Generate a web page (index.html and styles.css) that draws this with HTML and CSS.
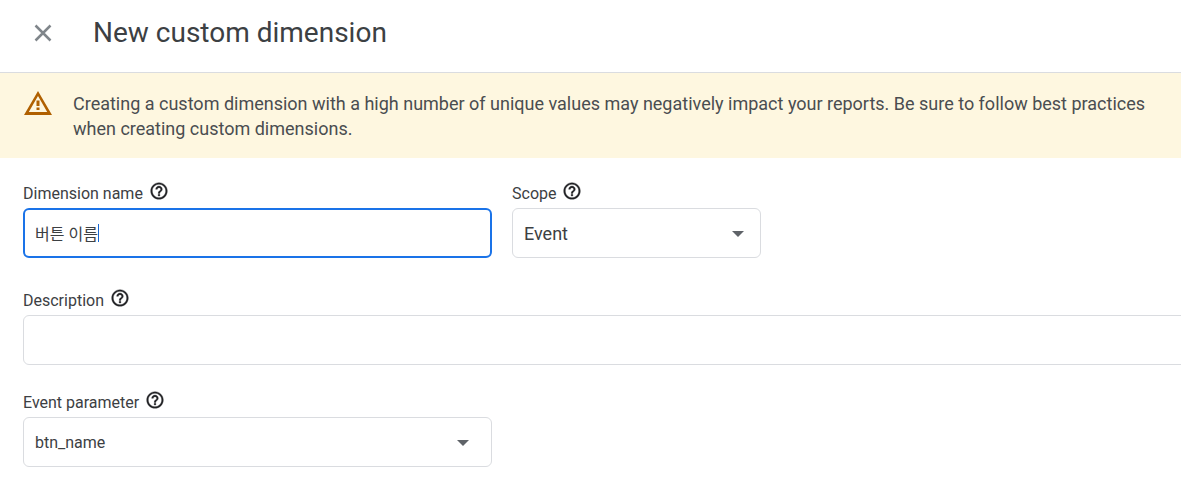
FILE: index.html
```html
<!DOCTYPE html>
<html lang="ko">
<head>
    <meta charset="utf-8">
    <meta name="viewport" content="width=device-width, initial-scale=1.0">
    <title>New custom dimension</title>
    <link rel="stylesheet" href="styles.css">
</head>
<body>
    <svg class="sprite" aria-hidden="true">
        <symbol id="ico-help" viewBox="0 0 24 24">
            <path d="M11 18h2v-2h-2v2zm1-16C6.48 2 2 6.48 2 12s4.48 10 10 10 10-4.48 10-10S17.52 2 12 2zm0 18c-4.41 0-8-3.59-8-8s3.59-8 8-8 8 3.59 8 8-3.59 8-8 8zm0-14c-2.21 0-4 1.79-4 4h2c0-1.1.9-2 2-2s2 .9 2 2c0 2-3 1.75-3 5h2c0-2.25 3-2.5 3-5 0-2.21-1.79-4-4-4z"/>
        </symbol>
    </svg>

    <header class="panel-header">
        <button type="button" class="btn-close" aria-label="Close">
            <svg viewBox="0 0 18 18"><path d="M1.5 1.5l15 15M16.5 1.5l-15 15"/></svg>
        </button>
        <h1>New custom dimension</h1>
    </header>

    <div class="notice" role="alert">
        <svg class="ico-warning" viewBox="0 0 28 24"><path d="M14 0L0 24h28zM14 5l9.2 16H4.8zM12.5 9.500h3v5.500h-3zM12.500 16.500h3v2.500h-3z"/></svg>
        <p>Creating a custom dimension with a high number of unique values may negatively impact your reports. Be sure to follow best practices when creating custom dimensions.</p>
    </div>

    <form class="dimension-form">
        <div class="row">
            <div class="field field-name">
                <div class="label"><label for="dimName">Dimension name</label><svg class="ico-help"><use href="#ico-help"/></svg></div>
                <div class="input-box">
                    <input type="text" id="dimName" class="control" value="버튼 이름" autofocus>
                    <span class="caret"></span>
                </div>
            </div>
            <div class="field field-scope">
                <div class="label"><label for="scope">Scope</label><svg class="ico-help"><use href="#ico-help"/></svg></div>
                <div class="select-box">
                    <select id="scope" class="control large"><option>Event</option></select>
                </div>
            </div>
        </div>
        <div class="field field-desc">
            <div class="label"><label for="desc">Description</label><svg class="ico-help"><use href="#ico-help"/></svg></div>
            <input type="text" id="desc" class="control">
        </div>
        <div class="field field-name">
            <div class="label"><label for="param">Event parameter</label><svg class="ico-help"><use href="#ico-help"/></svg></div>
            <div class="select-box wide">
                <select id="param" class="control"><option>btn_name</option></select>
            </div>
        </div>
    </form>
</body>
</html>
```

FILE: styles.css
```css
@charset 'utf-8';
html,body,h1,p,form,input,select,button { margin:0; padding:0; }
body { background-color:#fff; color:#3c4043; font-size:16px; font-family:Roboto, 'Noto Sans CJK KR', sans-serif; overflow-x:hidden; }
svg { display:block; flex:none; }
button { border:0; background:none; cursor:pointer; }
.sprite { position:absolute; width:0; height:0; }

/* header */
.panel-header { display:flex; align-items:center; gap:31px; padding:14px 24px 20px; border-bottom:1px solid #dadce0; }
.panel-header h1 { color:#3c4043; font-size:28px; font-weight:400; line-height:38px; }
.btn-close { padding:10px; }
.btn-close svg { width:18px; height:18px; fill:none; stroke:#80868b; stroke-width:2.5; }

/* warning */
.notice { display:flex; gap:21px; padding:18px 24px 17px; background-color:#fef7e0; color:#4a4d50; font-size:18px; line-height:25px; }
.ico-warning { width:28px; height:24px; fill:#b06000; fill-rule:evenodd; }

/* form */
.dimension-form { display:flex; flex-direction:column; gap:25px; padding:23px 0 24px 23px; overflow:hidden; }
.row { display:flex; gap:20px; margin-bottom:5px; }
.field-name { width:469px; }
.field-scope { width:249px; }
.field-desc { margin-right:-12px; }
.label { display:flex; gap:6px; height:27px; line-height:26px; }
.ico-help { width:20px; height:20px; fill:#202124; stroke:#202124; stroke-width:.4; }
.control { display:block; width:100%; height:50px; padding:0 11px; border:1px solid #dadce0; border-radius:6px; box-sizing:border-box; background-color:#fff; color:#3c4043; font-family:inherit; font-size:16px; appearance:none; }
.control.large { font-size:18px; }
.control:focus { padding:0 10px; border:2px solid #1a73e8; outline:0; caret-color:transparent; }
.input-box { position:relative; }
.caret { display:none; position:absolute; top:16px; left:75px; width:1px; height:18px; background-color:#1967d2; }
.control:focus + .caret { display:block; }
.select-box { position:relative; }
.select-box:after { content:''; position:absolute; top:23px; right:17px; border:6px solid transparent; border-top-color:#5f6368; border-bottom:0; pointer-events:none; }
.select-box.wide:after { right:23px; }
```
